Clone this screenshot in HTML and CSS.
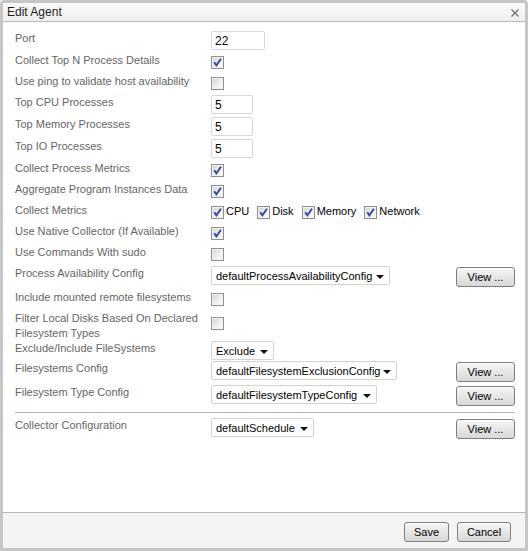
FILE: index.html
```html
<!DOCTYPE html>
<html>
<head>
<meta charset="utf-8">
<title>Edit Agent</title>
<link rel="stylesheet" href="styles.css">
</head>
<body>
<div class="window">
  <div class="titlebar">
    <span class="title">Edit Agent</span>
    <svg class="close" width="8" height="8" viewBox="0 0 8 8"><path d="M0.5 0.5 L7.5 7.5 M7.5 0.5 L0.5 7.5"/></svg>
  </div>
  <div class="content">
    <div class="row h22"><span class="lbl">Port</span><span class="field w54">22</span></div>
    <div class="row h21"><span class="lbl">Collect Top N Process Details</span><span class="cb on"><svg viewBox="0 0 11 11"><path d="M2.2 5.2 L4.4 8.4 L9 1.8"/></svg></span></div>
    <div class="row h21"><span class="lbl">Use ping to validate host availability</span><span class="cb"></span></div>
    <div class="row h22"><span class="lbl">Top CPU Processes</span><span class="field w42">5</span></div>
    <div class="row h22"><span class="lbl">Top Memory Processes</span><span class="field w42">5</span></div>
    <div class="row h22"><span class="lbl">Top IO Processes</span><span class="field w42">5</span></div>
    <div class="row h21"><span class="lbl">Collect Process Metrics</span><span class="cb on"><svg viewBox="0 0 11 11"><path d="M2.2 5.2 L4.4 8.4 L9 1.8"/></svg></span></div>
    <div class="row h21"><span class="lbl">Aggregate Program Instances Data</span><span class="cb on"><svg viewBox="0 0 11 11"><path d="M2.2 5.2 L4.4 8.4 L9 1.8"/></svg></span></div>
    <div class="row h21"><span class="lbl">Collect Metrics</span>
      <span class="multi">
        <span class="cb on"><svg viewBox="0 0 11 11"><path d="M2.2 5.2 L4.4 8.4 L9 1.8"/></svg></span><span class="opt">CPU</span>
        <span class="cb on"><svg viewBox="0 0 11 11"><path d="M2.2 5.2 L4.4 8.4 L9 1.8"/></svg></span><span class="opt">Disk</span>
        <span class="cb on"><svg viewBox="0 0 11 11"><path d="M2.2 5.2 L4.4 8.4 L9 1.8"/></svg></span><span class="opt">Memory</span>
        <span class="cb on"><svg viewBox="0 0 11 11"><path d="M2.2 5.2 L4.4 8.4 L9 1.8"/></svg></span><span class="opt">Network</span>
      </span>
    </div>
    <div class="row h21"><span class="lbl">Use Native Collector (If Available)</span><span class="cb on"><svg viewBox="0 0 11 11"><path d="M2.2 5.2 L4.4 8.4 L9 1.8"/></svg></span></div>
    <div class="row h21"><span class="lbl">Use Commands With sudo</span><span class="cb"></span></div>
    <div class="row h24"><span class="lbl">Process Availability Config</span><span class="sel w179"><span class="val">defaultProcessAvailabilityConfig</span><span class="arrow"></span></span><span class="btn view">View ...</span></div>
    <div class="row h21"><span class="lbl">Include mounted remote filesystems</span><span class="cb"></span></div>
    <div class="row h30"><span class="lbl">Filter Local Disks Based On Declared<br>Filesystem Types</span><span class="cb low"></span></div>
    <div class="row h20"><span class="lbl">Exclude/Include FileSystems</span><span class="sel w63"><span class="val">Exclude</span><span class="arrow"></span></span></div>
    <div class="row h24"><span class="lbl">Filesystems Config</span><span class="sel w186"><span class="val">defaultFilesystemExclusionConfig</span><span class="arrow"></span></span><span class="btn view">View ...</span></div>
    <div class="row h23"><span class="lbl">Filesystem Type Config</span><span class="sel w166"><span class="val">defaultFilesystemTypeConfig</span><span class="arrow"></span></span><span class="btn view">View ...</span></div>
    <div class="sep"></div>
    <div class="row h22"><span class="lbl">Collector Configuration</span><span class="sel w103"><span class="val">defaultSchedule</span><span class="arrow"></span></span><span class="btn view">View ...</span></div>
  </div>
  <div class="footer">
    <span class="btn save">Save</span>
    <span class="btn cancel">Cancel</span>
  </div>
</div>
</body>
</html>
```
FILE: styles.css
```css
html, body {
  margin: 0;
  padding: 0;
  background: #ffffff;
}

body {
  font-family: "Liberation Sans", Arial, sans-serif;
  font-size: 11px;
  color: #000;
}

.window {
  width: 528px;
  height: 551px;
  box-sizing: border-box;
  border: 3px solid #c6c6c6;
  border-radius: 4px 4px 0 0;
  display: flex;
  flex-direction: column;
  background: #fff;
}

.titlebar {
  height: 18px;
  border-bottom: 1px solid #b9b9b9;
  background: linear-gradient(#fafafa, #efefef);
  display: flex;
  align-items: center;
  justify-content: space-between;
  padding: 0 6px 0 4px;
}

.title {
  font-size: 12px;
  color: #1e1e1e;
}

.close {
  stroke: #707070;
  stroke-width: 1.3;
  fill: none;
  margin-top: 1px;
}

.content {
  flex: 1;
  padding: 8px 10px 0 12px;
}

.row {
  display: grid;
  grid-template-columns: 196px 1fr auto;
  align-items: start;
}

.h20 { height: 20px; }
.h21 { height: 21px; }
.h22 { height: 22px; }
.h23 { height: 23px; }
.h24 { height: 24px; }
.h30 { height: 30px; }

.lbl {
  color: #656565;
  line-height: 15px;
  padding-top: 1px;
}

.field {
  box-sizing: border-box;
  height: 19px;
  margin-top: 1px;
  border: 1px solid #d3d9df;
  border-radius: 2px;
  padding: 0 3px;
  line-height: 18px;
  font-size: 12px;
  color: #000;
  background: #fff;
}

.w54 { width: 54px; }
.w42 { width: 42px; }

.cb {
  width: 13px;
  height: 13px;
  box-sizing: border-box;
  margin-top: 4px;
  border: 1px solid #8f8f8f;
  background: linear-gradient(135deg, #d2d2d2 0%, #eeeeee 55%, #fdfdfd 100%);
  box-shadow: inset 0 0 0 1px #f2f2f2;
  display: block;
}

.cb svg {
  display: block;
  width: 11px;
  height: 11px;
  fill: none;
  stroke: #34489a;
  stroke-width: 1.9;
}

.cb.low { margin-top: 7px; }

.multi {
  display: flex;
  align-items: flex-start;
}

.multi .cb {
  flex: none;
}

.opt {
  line-height: 15px;
  margin: 2px 8px 0 2px;
  color: #000;
  font-size: 11px;
}

.sel {
  box-sizing: border-box;
  height: 19px;
  margin-top: 1px;
  border: 1px solid #d2d2d2;
  border-radius: 2px;
  background: #fff;
  display: flex;
  align-items: center;
  justify-content: space-between;
  padding: 0 5px 0 4px;
  font-size: 11px;
  color: #000;
}

.w179 { width: 179px; }
.w63 { width: 63px; }
.w186 { width: 186px; }
.w166 { width: 166px; }
.w103 { width: 103px; }

.val {
  white-space: nowrap;
}

.arrow {
  flex: none;
  width: 0;
  height: 0;
  border-left: 4px solid transparent;
  border-right: 4px solid transparent;
  border-top: 4px solid #111;
  margin-top: 2px;
}

.btn {
  box-sizing: border-box;
  height: 20px;
  border: 1px solid #7e7e7e;
  border-radius: 3px;
  background: linear-gradient(#f7f7f7, #e6e6e6 50%, #d8d8d8);
  box-shadow: inset 0 1px 0 #fff;
  display: flex;
  align-items: center;
  justify-content: center;
  color: #000;
  font-size: 11px;
}

.view {
  width: 59px;
  margin-top: 2px;
}

.sep {
  height: 1px;
  background: #b4b4b4;
  margin: 5px 0 4px;
}

.footer {
  height: 26px;
  border-top: 1px solid #b9b9b9;
  background: #f4f4f4;
  display: flex;
  justify-content: flex-end;
  align-items: flex-start;
  gap: 8px;
  padding: 9px 14px 0 0;
  flex: none;
}

.save { width: 45px; }
.cancel { width: 54px; }
```
